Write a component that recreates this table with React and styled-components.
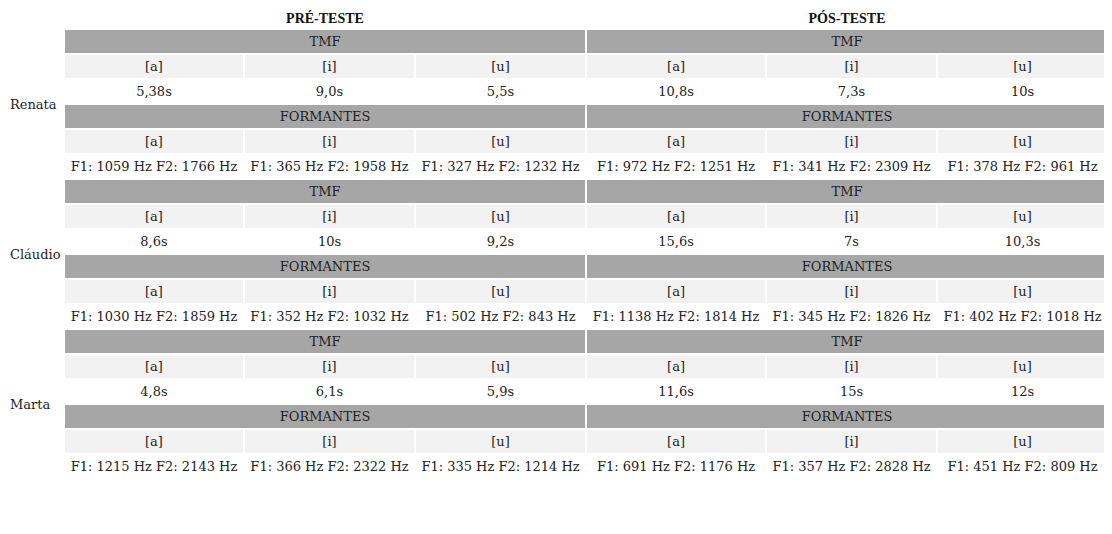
import React from 'react';
import styled, { createGlobalStyle } from 'styled-components';

const GlobalStyle = createGlobalStyle`
  body {
    margin: 8px;
    background: #fff;
    overflow-x: hidden;
    font-family: "DejaVu Serif", "Liberation Serif", serif;
  }
`;

const data = [
  {
    name: 'Renata',
    tmf: [['5,38s', '9,0s', '5,5s'], ['10,8s', '7,3s', '10s']],
    formantes: [
      ['F1: 1059 Hz F2: 1766 Hz', 'F1: 365 Hz F2: 1958 Hz', 'F1: 327 Hz F2: 1232 Hz'],
      ['F1: 972 Hz F2: 1251 Hz', 'F1: 341 Hz F2: 2309 Hz', 'F1: 378 Hz F2: 961 Hz'],
    ],
  },
  {
    name: 'Cláudio',
    tmf: [['8,6s', '10s', '9,2s'], ['15,6s', '7s', '10,3s']],
    formantes: [
      ['F1: 1030 Hz F2: 1859 Hz', 'F1: 352 Hz F2: 1032 Hz', 'F1: 502 Hz F2: 843 Hz'],
      ['F1: 1138 Hz F2: 1814 Hz', 'F1: 345 Hz F2: 1826 Hz', 'F1: 402 Hz F2: 1018 Hz'],
    ],
  },
  {
    name: 'Marta',
    tmf: [['4,8s', '6,1s', '5,9s'], ['11,6s', '15s', '12s']],
    formantes: [
      ['F1: 1215 Hz F2: 2143 Hz', 'F1: 366 Hz F2: 2322 Hz', 'F1: 335 Hz F2: 1214 Hz'],
      ['F1: 691 Hz F2: 1176 Hz', 'F1: 357 Hz F2: 2828 Hz', 'F1: 451 Hz F2: 809 Hz'],
    ],
  },
];

const vowels = ['[a]', '[i]', '[u]'];
const colWidths = [53, 178, 169, 169, 178, 169, 169];

export default function App() {
  const sectionRow = (label) => (
    <tr>
      <SectionCell colSpan={3}>{label}</SectionCell>
      <SectionCell colSpan={3}>{label}</SectionCell>
    </tr>
  );
  const vowelRow = () => (
    <tr>
      {[...vowels, ...vowels].map((v, i) => (
        <VowelCell key={i}>{v}</VowelCell>
      ))}
    </tr>
  );
  const valueRow = (pair) => (
    <tr>
      {[...pair[0], ...pair[1]].map((v, i) => (
        <ValueCell key={i}>{v}</ValueCell>
      ))}
    </tr>
  );

  return (
    <>
      <GlobalStyle />
      <Table>
        <colgroup>
          {colWidths.map((w, i) => (
            <col key={i} style={{ width: w }} />
          ))}
        </colgroup>
        <thead>
          <tr>
            <HeadCell />
            <HeadCell colSpan={3}>PRÉ-TESTE</HeadCell>
            <HeadCell colSpan={3}>PÓS-TESTE</HeadCell>
          </tr>
        </thead>
        {data.map((p) => (
          <tbody key={p.name}>
            <tr>
              <NameCell rowSpan={6}>{p.name}</NameCell>
              <SectionCell colSpan={3}>TMF</SectionCell>
              <SectionCell colSpan={3}>TMF</SectionCell>
            </tr>
            {vowelRow()}
            {valueRow(p.tmf)}
            {sectionRow('FORMANTES')}
            {vowelRow()}
            {valueRow(p.formantes)}
          </tbody>
        ))}
      </Table>
    </>
  );
}

const Table = styled.table`
  table-layout: fixed;
  width: 1101px;
  border-collapse: separate;
  border-spacing: 2px;
  color: #222;
  font: 400 13px "DejaVu Serif", "Liberation Serif", serif;
`;

const Cell = styled.td`
  padding: 0;
  height: 23px;
  text-align: center;
  vertical-align: middle;
  white-space: nowrap;
`;

const HeadCell = styled.th`
  padding: 0;
  height: 18px;
  text-align: center;
  vertical-align: middle;
  font: 700 14px "Liberation Serif", serif;
  color: #111;
`;

const NameCell = styled(Cell)`
  height: auto;
  text-align: left;
`;

const SectionCell = styled(Cell)`
  background: #a6a6a6;
`;

const VowelCell = styled(Cell)`
  background: #f2f2f2;
`;

const ValueCell = styled(Cell)`
  background: #fff;
`;
